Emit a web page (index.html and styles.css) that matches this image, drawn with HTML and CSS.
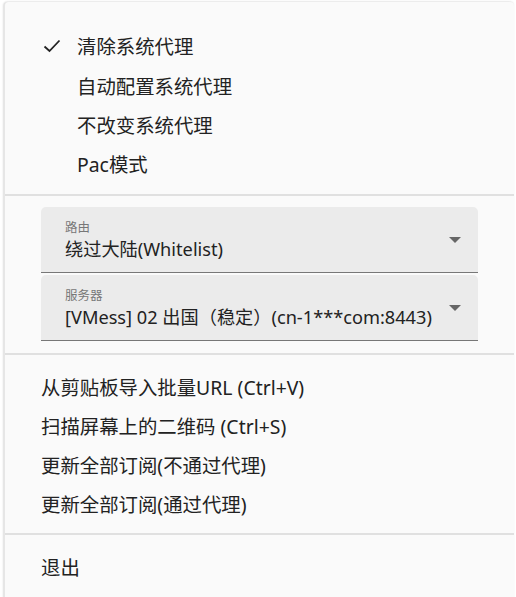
FILE: index.html
```html
<!DOCTYPE html>
<html lang="zh-CN">
<head>
<meta charset="utf-8">
<link rel="stylesheet" href="styles.css">
</head>
<body>
<div class="menu">
  <div class="section first">
    <div class="item"><span class="check"><svg width="18" height="14" viewBox="0 0 18 14"><path d="M1.5 7.5 L6.5 12 L16.5 1.5" fill="none" stroke="#222" stroke-width="1.8"/></svg></span><span class="label">清除系统代理</span></div>
    <div class="item"><span class="check"></span><span class="label">自动配置系统代理</span></div>
    <div class="item"><span class="check"></span><span class="label">不改变系统代理</span></div>
    <div class="item"><span class="check"></span><span class="label">Pac模式</span></div>
  </div>
  <div class="divider"></div>
  <div class="section fields">
    <div class="field">
      <div class="field-text">
        <div class="field-label">路由</div>
        <div class="field-value">绕过大陆(Whitelist)</div>
      </div>
      <span class="arrow"></span>
    </div>
    <div class="field">
      <div class="field-text">
        <div class="field-label">服务器</div>
        <div class="field-value">[VMess] 02 出国（稳定）(cn-1***com:8443)</div>
      </div>
      <span class="arrow"></span>
    </div>
  </div>
  <div class="divider"></div>
  <div class="section plain">
    <div class="item">从剪贴板导入批量URL (Ctrl+V)</div>
    <div class="item">扫描屏幕上的二维码 (Ctrl+S)</div>
    <div class="item">更新全部订阅(不通过代理)</div>
    <div class="item">更新全部订阅(通过代理)</div>
  </div>
  <div class="divider"></div>
  <div class="section plain last">
    <div class="item">退出</div>
  </div>
</div>
</body>
</html>
```
FILE: styles.css
```css
* { box-sizing: border-box; }
html, body { margin: 0; padding: 0; }
body {
  background: #ffffff;
  width: 516px;
  height: 597px;
  overflow: hidden;
  font-family: "Noto Sans", "Noto Sans CJK SC", sans-serif;
  color: #222;
}
.menu {
  margin: 2px 2px 0 4px;
  height: 600px;
  background: #fafafa;
  border-radius: 4px 4px 0 0;
  border-left: 1px solid #e6e6e6;
  box-shadow: -1px 0 2px rgba(0,0,0,0.12), 0 -1px 2px rgba(0,0,0,0.06);
}
.section { display: flex; flex-direction: column; }
.first { padding: 24px 0 11px; }
.item {
  height: 39px;
  display: flex;
  align-items: center;
  font-size: 19.4px;
  line-height: 1;
  padding-top: 3px;
  white-space: nowrap;
}
.first .item { padding-left: 38px; height: 39.25px; }
.check { width: 34px; display: flex; align-items: center; margin-top: -3px; }
.check svg { display: block; }
.divider { height: 2px; background: #e0e0e0; }
.fields { padding: 11px 0 12px 36px; gap: 2px; }
.field {
  width: 437px;
  height: 66px;
  background: #ebebeb;
  border-radius: 5px 5px 0 0;
  border-bottom: 1px solid #777;
  display: flex;
  align-items: center;
  padding: 0 17px 0 24px;
}
.field-text { flex: 1; padding-top: 2px; }
.field-label { font-size: 12.5px; color: #777; line-height: 16px; }
.field-value { font-size: 18.2px; color: #222; line-height: 24px; margin-top: 1px; white-space: nowrap; }
.arrow {
  width: 0; height: 0;
  border-left: 6px solid transparent;
  border-right: 6px solid transparent;
  border-top: 6px solid #666;
  margin-top: 0;
}
.plain { padding: 12px 0 10px 36px; }
.last { padding-top: 12px; }
```
